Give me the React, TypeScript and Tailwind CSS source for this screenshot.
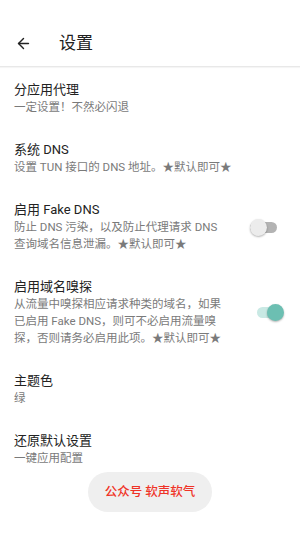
import { ArrowLeft } from "lucide-react";

type Item = {
  title: string;
  sub: string;
  toggle?: boolean;
};

const items: Item[] = [
  { title: "分应用代理", sub: "一定设置！不然必闪退" },
  { title: "系统 DNS", sub: "设置 TUN 接口的 DNS 地址。★默认即可★" },
  {
    title: "启用 Fake DNS",
    sub: "防止 DNS 污染，以及防止代理请求 DNS 查询域名信息泄漏。★默认即可★",
    toggle: false,
  },
  {
    title: "启用域名嗅探",
    sub: "从流量中嗅探相应请求种类的域名，如果已启用 Fake DNS，则可不必启用流量嗅探，否则请务必启用此项。★默认即可★",
    toggle: true,
  },
  { title: "主题色", sub: "绿" },
  { title: "还原默认设置", sub: "一键应用配置" },
];

function Switch({ on }: { on: boolean }) {
  return (
    <div className="relative w-[34px] h-[17px] shrink-0 ml-[22px]">
      {on ? (
        <>
          <div className="absolute left-[7px] top-[3px] w-[24px] h-[11px] rounded-full bg-[#c9e9e4]" />
          <div className="absolute right-0 top-0 w-[17px] h-[17px] rounded-full bg-[#6cbfb2] shadow-[0_1px_2px_rgba(0,0,0,0.3)]" />
        </>
      ) : (
        <>
          <div className="absolute left-0 top-[3px] w-[27px] h-[11px] rounded-full bg-[#b3b3b3]" />
          <div className="absolute left-0 top-0 w-[17px] h-[17px] rounded-full bg-[#ececec] shadow-[0_1px_2px_rgba(0,0,0,0.3)]" />
        </>
      )}
    </div>
  );
}

export default function App() {
  return (
    <div
      className="relative w-[300px] h-[533px] bg-white overflow-hidden"
      style={{ fontFamily: 'Roboto, "Noto Sans CJK SC", sans-serif' }}
    >
      {/* Toolbar */}
      <div className="pt-[20px] h-[67px] flex items-center border-b border-[#e8e8e8] shadow-[0_1px_1px_rgba(0,0,0,0.04)]">
        <ArrowLeft className="ml-[15px] w-[17px] h-[17px] text-[#222]" strokeWidth={2} />
        <span className="ml-[27px] text-[17px] text-[#212121] leading-none">设置</span>
      </div>

      {/* Settings list */}
      <div className="pt-[1.5px]">
        {items.map((it) => (
          <div key={it.title} className="flex items-center pl-[14px] pr-[16px] py-[12.5px]">
            <div className="flex-1 min-w-0">
              <div className="text-[13px] leading-[18px] text-[#222]">{it.title}</div>
              <div className="text-[11.5px] leading-[17px] text-[#7a7a7a]">{it.sub}</div>
            </div>
            {it.toggle !== undefined && <Switch on={it.toggle} />}
          </div>
        ))}
      </div>

      {/* Toast */}
      <div className="absolute left-[88px] bottom-[21px] w-[124px] h-[40px] rounded-full bg-[#efefef] flex items-center justify-center">
        <span className="text-[12.5px] font-medium text-[#ef3327]">公众号 软声软气</span>
      </div>
    </div>
  );
}
